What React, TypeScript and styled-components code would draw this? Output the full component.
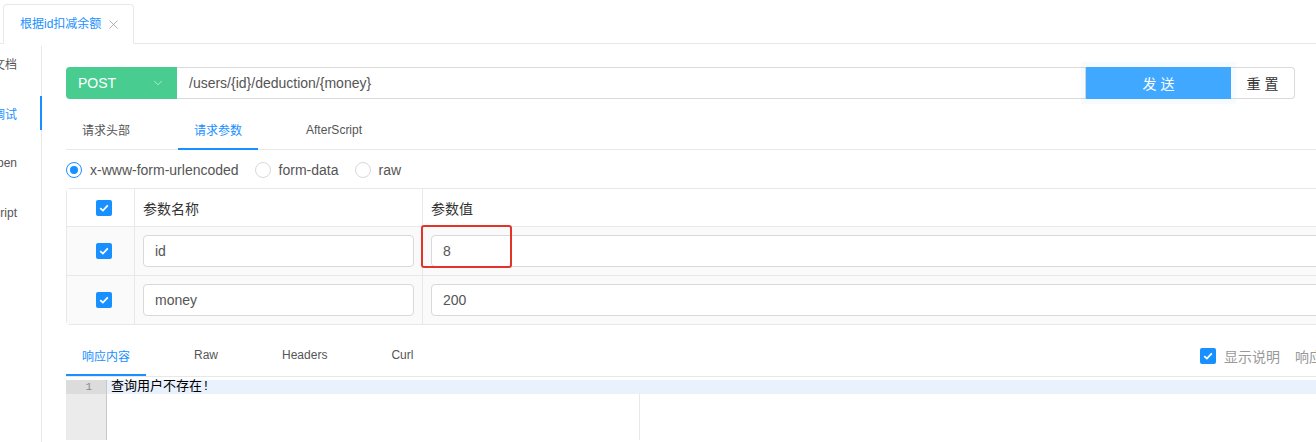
import React from "react";
import styled, { createGlobalStyle } from "styled-components";
import { X, ChevronDown } from "lucide-react";

const GlobalStyle = createGlobalStyle`
  html, body { margin: 0; padding: 0; background: #fff; overflow: hidden; }
  body { font-family: "Liberation Sans", "Noto Sans CJK SC", sans-serif; color: #555; }
  * { box-sizing: border-box; }
`;

const Page = styled.div`
  width: 1316px;
  height: 442px;
  overflow: hidden;
  background: #fff;
`;

const DocTabBar = styled.div`
  height: 44px;
  display: flex;
  align-items: flex-end;
  padding-left: 3px;
  border-bottom: 1px solid #e8e8e8;
`;
const DocTab = styled.div`
  height: 40px;
  margin-bottom: -1px;
  padding: 0 12px 0 16px;
  display: flex;
  align-items: center;
  gap: 5px;
  border: 1px solid #e8e8e8;
  border-bottom-color: #fff;
  border-radius: 4px 4px 0 0;
  background: #fff;
  color: #1890ff;
  font-size: 12px;
  line-height: 14px;
  svg { color: #999; }
`;

const Body = styled.div`
  display: flex;
  height: 398px;
`;
const SideNav = styled.div`
  flex: none;
  width: 42px;
  margin-top: 2px;
  border-right: 1px solid #e8e8e8;
`;
const NavItem = styled.div<{ $active?: boolean }>`
  height: 34px;
  margin: 0 -1px 16px 0;
  padding-right: 23px;
  display: flex;
  align-items: center;
  justify-content: flex-end;
  overflow: hidden;
  white-space: nowrap;
  font-size: 12px;
  color: ${(p) => (p.$active ? "#1890ff" : "#555")};
  border-right: 2px solid ${(p) => (p.$active ? "#1890ff" : "transparent")};
  span { flex: none; }
`;

const Main = styled.div`
  flex: none;
  width: 1330px;
  padding: 23px 0 0 24px;
`;

const UrlBar = styled.div`
  display: flex;
  width: 1229px;
  height: 32px;
  font-size: 14px;
`;
const MethodSelect = styled.div`
  width: 111px;
  padding: 0 12px;
  display: flex;
  align-items: center;
  justify-content: space-between;
  background: #49cc90;
  color: #fff;
  border-radius: 4px 0 0 4px;
  svg { color: rgba(255, 255, 255, 0.75); }
`;
const UrlInput = styled.div`
  flex: 1;
  padding: 0 12px;
  display: flex;
  align-items: center;
  border: 1px solid #d9d9d9;
  border-left: none;
  color: #555;
`;
const SendButton = styled.div`
  width: 145px;
  display: flex;
  align-items: center;
  justify-content: center;
  background: #40a9ff;
  color: #fff;
  letter-spacing: 4px;
  text-indent: 4px;
  box-shadow: 0 0 0 5px rgba(64, 169, 255, 0.05);
`;
const ResetButton = styled.div`
  width: 64px;
  display: flex;
  align-items: center;
  justify-content: center;
  border: 1px solid #d9d9d9;
  border-left: none;
  border-radius: 0 4px 4px 0;
  color: #333;
  letter-spacing: 4px;
  text-indent: 4px;
`;

const TabBar = styled.div<{ $top: number; $h: number }>`
  margin-top: ${(p) => p.$top}px;
  display: flex;
  align-items: flex-end;
  height: ${(p) => p.$h}px;
  border-bottom: 1px solid #e8e8e8;
`;
const TabList = styled.div`
  flex: none;
  width: 1134px;
  display: flex;
  height: 100%;
`;
const Tab = styled.div<{ $active?: boolean }>`
  height: 100%;
  margin: 0 32px -1px 0;
  padding: 0 16px;
  display: flex;
  align-items: center;
  font-size: 12px;
  color: ${(p) => (p.$active ? "#1890ff" : "#555")};
  border-bottom: 2px solid ${(p) => (p.$active ? "#1890ff" : "transparent")};
`;
const Extras = styled.div`
  align-self: center;
  display: flex;
  align-items: center;
  gap: 8px;
  font-size: 14px;
  color: #999;
  white-space: nowrap;
  span + span { margin-left: 7px; }
`;

const RadioRow = styled.div`
  margin-top: 9px;
  height: 22px;
  display: flex;
  align-items: center;
  gap: 16px;
  font-size: 14px;
  color: #555;
`;
const RadioItem = styled.label`
  display: flex;
  align-items: center;
  gap: 8px;
`;
const RadioDot = styled.span<{ $checked?: boolean }>`
  width: 16px;
  height: 16px;
  border-radius: 50%;
  border: 1px solid ${(p) => (p.$checked ? "#1890ff" : "#d9d9d9")};
  display: flex;
  align-items: center;
  justify-content: center;
  &::after {
    content: "";
    width: 8px;
    height: 8px;
    border-radius: 50%;
    background: ${(p) => (p.$checked ? "#1890ff" : "transparent")};
  }
`;

const Table = styled.div`
  margin-top: 7px;
  border: 1px solid #e8e8e8;
  border-radius: 4px;
  font-size: 14px;
`;
const Row = styled.div<{ $head?: boolean }>`
  display: flex;
  height: ${(p) => (p.$head ? 38 : 49)}px;
  background: ${(p) => (p.$head ? "#fff" : "#fafafa")};
  border-bottom: 1px solid #e8e8e8;
  &:last-child { border-bottom: none; height: 48px; }
`;
const CheckCell = styled.div`
  flex: none;
  width: 68px;
  padding-left: 29px;
  display: flex;
  align-items: center;
  border-right: 1px solid #e8e8e8;
`;
const Cell = styled.div<{ $w?: number }>`
  position: relative;
  ${(p) => (p.$w ? `flex: none; width: ${p.$w}px; border-right: 1px solid #e8e8e8;` : "flex: 1;")}
  padding: 0 8px;
  display: flex;
  align-items: center;
  color: #333;
`;
const ParamInput = styled.div`
  flex: 1;
  height: 32px;
  padding: 0 11px;
  display: flex;
  align-items: center;
  background: #fff;
  border: 1px solid #d9d9d9;
  border-radius: 4px;
  color: #555;
`;
const Highlight = styled.div`
  position: absolute;
  left: -2px;
  top: -2px;
  width: 91px;
  height: 43px;
  border: 2px solid #e3342a;
  border-radius: 3px;
`;

const CheckBox = styled.div`
  flex: none;
  width: 16px;
  height: 16px;
  border-radius: 2px;
  background: #1890ff;
  display: flex;
  align-items: center;
  justify-content: center;
`;

const Editor = styled.div`
  margin-top: 3px;
  display: flex;
  height: 60px;
`;
const Gutter = styled.div`
  flex: none;
  width: 41px;
  background: #ebebeb;
  border-right: 1px solid #c8c8c8;
`;
const GutterCell = styled.div`
  height: 14px;
  padding-right: 14px;
  background: #dcdcdc;
  text-align: right;
  font-family: "Liberation Mono", monospace;
  font-size: 11px;
  line-height: 14px;
  color: #888;
`;
const Code = styled.div`
  position: relative;
  flex: 1;
`;
const ActiveLine = styled.div`
  position: relative;
  z-index: 1;
  height: 14px;
  padding-left: 4px;
  background: #e8f1fc;
  font-family: "Liberation Mono", "Noto Sans CJK SC", monospace;
  font-size: 13px;
  line-height: 14px;
  color: #000;
`;
const PrintMargin = styled.div`
  position: absolute;
  left: 532px;
  top: 0;
  bottom: 0;
  width: 1px;
  background: #e8e8e8;
`;

const Check = () => (
  <CheckBox>
    <svg width="10" height="8" viewBox="0 0 10 8">
      <path d="M1.2 4.1 L3.9 6.6 L8.8 1.4" fill="none" stroke="#fff" strokeWidth="1.8" />
    </svg>
  </CheckBox>
);

const params = [
  { name: "id", value: "8", mark: true },
  { name: "money", value: "200", mark: false },
];

export default function App() {
  return (
    <Page>
      <GlobalStyle />
      <DocTabBar>
        <DocTab>
          根据id扣减余额
          <X size={15} strokeWidth={1.2} />
        </DocTab>
      </DocTabBar>
      <Body>
        <SideNav>
          <NavItem><span>文档</span></NavItem>
          <NavItem $active><span>调试</span></NavItem>
          <NavItem><span>Open</span></NavItem>
          <NavItem><span>Script</span></NavItem>
        </SideNav>
        <Main>
          <UrlBar>
            <MethodSelect>
              POST
              <ChevronDown size={14} strokeWidth={1.3} />
            </MethodSelect>
            <UrlInput>/users/{"{id}"}/deduction/{"{money}"}</UrlInput>
            <SendButton>发送</SendButton>
            <ResetButton>重置</ResetButton>
          </UrlBar>

          <TabBar $top={11} $h={40}>
            <Tab>请求头部</Tab>
            <Tab $active>请求参数</Tab>
            <Tab>AfterScript</Tab>
          </TabBar>

          <RadioRow>
            <RadioItem><RadioDot $checked />x-www-form-urlencoded</RadioItem>
            <RadioItem><RadioDot />form-data</RadioItem>
            <RadioItem><RadioDot />raw</RadioItem>
          </RadioRow>

          <Table>
            <Row $head>
              <CheckCell><Check /></CheckCell>
              <Cell $w={288}>参数名称</Cell>
              <Cell>参数值</Cell>
            </Row>
            {params.map((p) => (
              <Row key={p.name}>
                <CheckCell><Check /></CheckCell>
                <Cell $w={288}><ParamInput>{p.name}</ParamInput></Cell>
                <Cell>
                  <ParamInput>{p.value}</ParamInput>
                  {p.mark && <Highlight />}
                </Cell>
              </Row>
            ))}
          </Table>

          <TabBar $top={11} $h={41}>
            <TabList>
              <Tab $active>响应内容</Tab>
              <Tab>Raw</Tab>
              <Tab>Headers</Tab>
              <Tab>Curl</Tab>
            </TabList>
            <Extras>
              <Check />
              <span>显示说明</span>
              <span>响应码: 200</span>
            </Extras>
          </TabBar>

          <Editor>
            <Gutter>
              <GutterCell>1</GutterCell>
            </Gutter>
            <Code>
              <PrintMargin />
              <ActiveLine>查询用户不存在!</ActiveLine>
            </Code>
          </Editor>
        </Main>
      </Body>
    </Page>
  );
}
